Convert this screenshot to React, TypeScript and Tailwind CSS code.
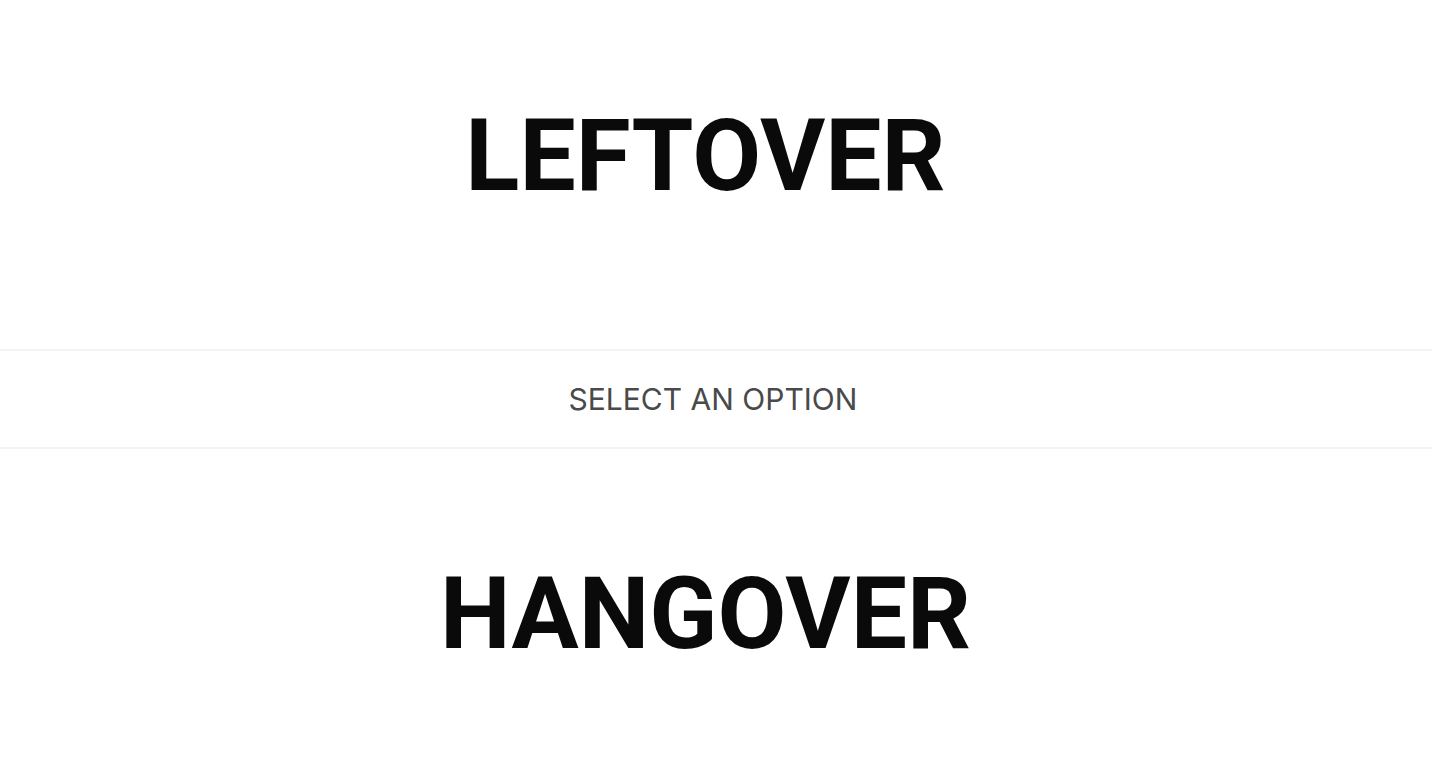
export default function App() {
  return (
    <div className="min-h-screen w-full bg-white font-['Roboto',sans-serif]">
      <section className="flex h-[349px] items-center justify-center pr-[21px] pb-[37px]">
        <h1 className="text-[100px] leading-[100px] font-bold text-[#0a0a0a]">LEFTOVER</h1>
      </section>

      <div className="flex h-[100px] items-center justify-center border-y-2 border-[#f3f3f3] pr-[6px]">
        <span className="font-['Inter',sans-serif] text-[30px] leading-none text-[#4a4a4a]">SELECT AN OPTION</span>
      </div>

      <section className="flex justify-center pt-[115px] pr-[21px]">
        <h1 className="text-[100px] leading-[100px] font-bold text-[#0a0a0a]">HANGOVER</h1>
      </section>
    </div>
  )
}
